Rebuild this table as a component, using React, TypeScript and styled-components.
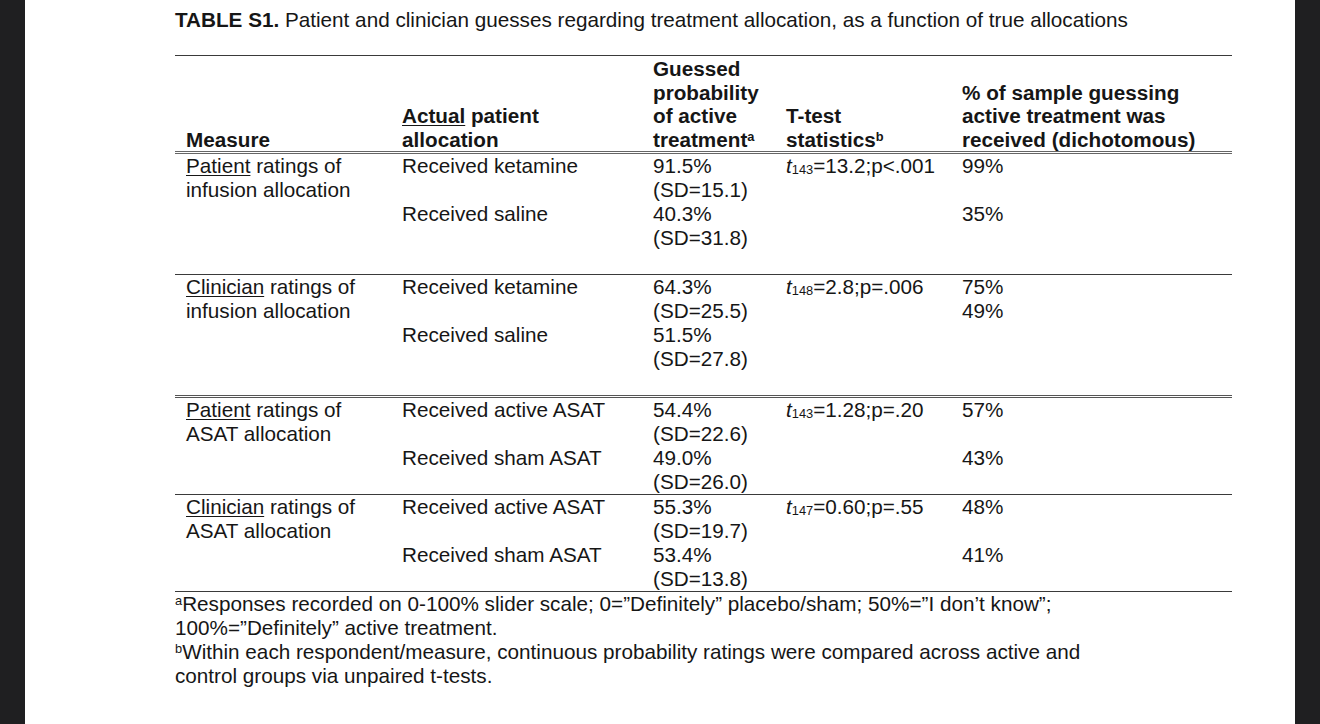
import React from "react";
import styled, { createGlobalStyle } from "styled-components";

const GlobalStyle = createGlobalStyle`
  html, body {
    margin: 0;
    padding: 0;
    background: #1f1f21;
  }
  body {
    font-family: "Liberation Sans", Arial, sans-serif;
  }
`;

const Screen = styled.div`
  display: flex;
  min-height: 724px;
  padding: 0 25px;
  background: #1f1f21;
`;

const Sheet = styled.main`
  flex: 1;
  background: #fff;
  color: #161616;
  padding: 9px 63px 0 150px;
  font-size: 20.7px;
  line-height: 24px;
`;

const Title = styled.h1`
  margin: 0;
  font-size: 20.7px;
  line-height: 22px;
  font-weight: normal;

  b {
    font-weight: bold;
  }
`;

const Table = styled.table`
  width: 100%;
  margin-top: 24px;
  border-collapse: collapse;
  table-layout: fixed;
  border-bottom: 1px solid #3a3a3a;
`;

const HeadCell = styled.th`
  text-align: left;
  vertical-align: bottom;
  font-weight: bold;
  line-height: 23.5px;
  padding: 1px 0 0 11px;
  border-top: 1px solid #3a3a3a;
  border-bottom: 3px double #666;
`;

const Group = styled.tbody<{ $rule?: "single" | "double"; $spacious?: boolean }>`
  border-top: ${(p) =>
    p.$rule === "double"
      ? "3px double #555"
      : p.$rule === "single"
      ? "1px solid #3a3a3a"
      : "none"};

  tr:last-child td {
    padding-bottom: ${(p) => (p.$spacious ? "24px" : "0")};
  }
`;

const Cell = styled.td`
  vertical-align: top;
  padding: 0 0 0 11px;
  white-space: nowrap;
`;

const U = styled.span`
  text-decoration: underline;
  text-underline-offset: 2px;
  text-decoration-thickness: 1px;
`;

const Sup = styled.span`
  font-size: 0.62em;
  line-height: 0;
  vertical-align: 0.5em;
`;

const Sub = styled.span`
  font-size: 0.62em;
  line-height: 0;
  vertical-align: -0.06em;
`;

const Notes = styled.div`
  padding-top: 0;
`;

const Note = styled.p`
  margin: 0;
`;

type Row = { alloc: string; prob: string[]; pct: string[] };
type GroupData = {
  who: string;
  rest: string;
  second: string;
  rule?: "single" | "double";
  spacious?: boolean;
  n: string;
  stat: string;
  rows: Row[];
};

const groups: GroupData[] = [
  {
    who: "Patient",
    rest: " ratings of",
    second: "infusion allocation",
    spacious: true,
    n: "143",
    stat: "=13.2;p<.001",
    rows: [
      { alloc: "Received ketamine", prob: ["91.5%", "(SD=15.1)"], pct: ["99%"] },
      { alloc: "Received saline", prob: ["40.3%", "(SD=31.8)"], pct: ["35%"] },
    ],
  },
  {
    who: "Clinician",
    rest: " ratings of",
    second: "infusion allocation",
    rule: "single",
    spacious: true,
    n: "148",
    stat: "=2.8;p=.006",
    rows: [
      { alloc: "Received ketamine", prob: ["64.3%", "(SD=25.5)"], pct: ["75%", "49%"] },
      { alloc: "Received saline", prob: ["51.5%", "(SD=27.8)"], pct: [] },
    ],
  },
  {
    who: "Patient",
    rest: " ratings of",
    second: "ASAT allocation",
    rule: "double",
    n: "143",
    stat: "=1.28;p=.20",
    rows: [
      { alloc: "Received active ASAT", prob: ["54.4%", "(SD=22.6)"], pct: ["57%"] },
      { alloc: "Received sham ASAT", prob: ["49.0%", "(SD=26.0)"], pct: ["43%"] },
    ],
  },
  {
    who: "Clinician",
    rest: " ratings of",
    second: "ASAT allocation",
    rule: "single",
    n: "147",
    stat: "=0.60;p=.55",
    rows: [
      { alloc: "Received active ASAT", prob: ["55.3%", "(SD=19.7)"], pct: ["48%"] },
      { alloc: "Received sham ASAT", prob: ["53.4%", "(SD=13.8)"], pct: ["41%"] },
    ],
  },
];

const Lines = ({ items }: { items: string[] }) => (
  <>
    {items.map((t, i) => (
      <React.Fragment key={i}>
        {i > 0 && <br />}
        {t}
      </React.Fragment>
    ))}
  </>
);

const App = () => {
  return (
    <Screen>
      <GlobalStyle />
      <Sheet>
        <Title>
          <b>TABLE S1.</b> Patient and clinician guesses regarding treatment
          allocation, as a function of true allocations
        </Title>
        <Table>
          <colgroup>
            <col style={{ width: 216 }} />
            <col style={{ width: 251 }} />
            <col style={{ width: 133 }} />
            <col style={{ width: 176 }} />
            <col style={{ width: 281 }} />
          </colgroup>
          <thead>
            <tr>
              <HeadCell>Measure</HeadCell>
              <HeadCell>
                <U>Actual</U> patient
                <br />
                allocation
              </HeadCell>
              <HeadCell>
                Guessed
                <br />
                probability
                <br />
                of active
                <br />
                treatment<Sup>a</Sup>
              </HeadCell>
              <HeadCell>
                T-test
                <br />
                statistics<Sup>b</Sup>
              </HeadCell>
              <HeadCell>
                % of sample guessing
                <br />
                active treatment was
                <br />
                received (dichotomous)
              </HeadCell>
            </tr>
          </thead>
          {groups.map((g, gi) => (
            <Group key={gi} $rule={g.rule} $spacious={g.spacious}>
              {g.rows.map((r, ri) => (
                <tr key={ri}>
                  {ri === 0 && (
                    <Cell rowSpan={2}>
                      <U>{g.who}</U>
                      {g.rest}
                      <br />
                      {g.second}
                    </Cell>
                  )}
                  <Cell>{r.alloc}</Cell>
                  <Cell>
                    <Lines items={r.prob} />
                  </Cell>
                  {ri === 0 && (
                    <Cell rowSpan={2}>
                      <i>t</i>
                      <Sub>{g.n}</Sub>
                      {g.stat}
                    </Cell>
                  )}
                  <Cell>
                    <Lines items={r.pct} />
                  </Cell>
                </tr>
              ))}
            </Group>
          ))}
        </Table>
        <Notes>
          <Note>
            <Sup>a</Sup>Responses recorded on 0-100% slider scale;
            0=”Definitely” placebo/sham; 50%=”I don’t know”;
            <br />
            100%=”Definitely” active treatment.
          </Note>
          <Note>
            <Sup>b</Sup>Within each respondent/measure, continuous probability
            ratings were compared across active and
            <br />
            control groups via unpaired t-tests.
          </Note>
        </Notes>
      </Sheet>
    </Screen>
  );
};

export default App;
